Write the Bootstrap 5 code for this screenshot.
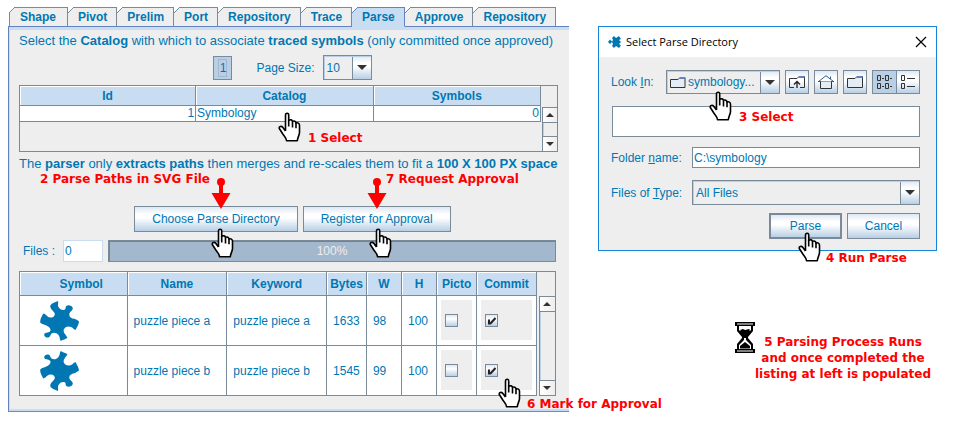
<!DOCTYPE html>
<html lang="en">
<head>
<meta charset="utf-8">
<meta name="viewport" content="width=device-width, initial-scale=1">
<title>Parse symbols</title>
<link href="https://cdn.jsdelivr.net/npm/bootstrap@5.3.0/dist/css/bootstrap.min.css" rel="stylesheet">
<style>
:root{--line:#7a8a99;--head:#c8ddf2;--ink:#0077b3;--edge:#6382bf;--face:#eee;
 --btn:linear-gradient(#dde8f3 0,#fff 30%,#fff 45%,#b8cfe5 100%);}
body{font-family:"Liberation Sans",Arial,sans-serif;font-size:12px;line-height:16px;color:var(--ink);background:#fff}
.screen{display:grid;grid-template-columns:561fr 339fr;column-gap:29px;padding:7px 27px 0 8px;align-items:start}
button,input,select{color:var(--ink);font-size:12px;border-radius:0}
/* tab strip */
.tabstrip{position:relative;z-index:1;margin-bottom:-1px;padding-left:1px}
.tabstrip button{position:relative;background:var(--face);border:1px solid var(--line);border-left:0;height:20px;padding:0 9px 0 10px;font-weight:700;line-height:18px;margin:0}
.tabstrip li:first-child button{border-left:1px solid var(--line)}
.tabstrip button::before{content:"";position:absolute;left:0;top:-1px;width:6px;height:6px;background:linear-gradient(135deg,#fff 0 45%,var(--line) 45% 58%,var(--face) 58%)}
.tabstrip li:first-child button{padding-right:11px}
.tabstrip li:first-child button::before{left:-1px}
.tabstrip button{border-bottom-color:var(--edge)}
.tabstrip button.active{background:var(--head);border-color:var(--edge);border-bottom-color:var(--head)}
.tabstrip button.active::before{background:linear-gradient(135deg,#fff 0 45%,var(--edge) 45% 58%,var(--head) 58%)}
.pane{border-left:1px solid var(--edge);border-top:1px solid var(--edge);border-bottom:1px solid var(--line);background:var(--face);box-shadow:inset 1px 3px var(--head),inset 0 -2px var(--head);padding:6px 11px 15px 10px}
.note-line{font-size:13px;line-height:16px;white-space:nowrap}
.pager{margin-top:6px;height:25px}
.pagebtn{width:19px;height:24px;border:1px solid var(--line);background:#b8cfe5;padding:0;line-height:16px}
.pagebtn span{display:block;margin:2px 4px;border:1px solid #a3b8cc}
/* drop-downs */
.combo{appearance:none;border:1px solid var(--line);height:25px;padding:0 22px 0 3px;box-shadow:inset 1px 1px #b8cfe5;
 background:url("data:image/svg+xml,%3Csvg xmlns='http://www.w3.org/2000/svg' width='10' height='5'%3E%3Cpath d='M0 0h10L5 5z' fill='%23333'/%3E%3C/svg%3E") no-repeat right 4px center,
 linear-gradient(var(--line),var(--line)) no-repeat right 18px top/1px 100%,
 var(--btn) no-repeat right top/18px 100%,var(--face)}
.combo-size{width:49px}
.combo-folder{height:24px;width:114px;padding-left:21px;
 background:url("data:image/svg+xml,%3Csvg xmlns='http://www.w3.org/2000/svg' width='17' height='13'%3E%3Cpath d='M1.5 3.5H9L11 1.5h5v10H1.5z' fill='%23e4edf6' stroke='%23333'/%3E%3Cpath d='M11 1h5v2h-6z' fill='%236382bf'/%3E%3C/svg%3E") no-repeat 2px center,
 url("data:image/svg+xml,%3Csvg xmlns='http://www.w3.org/2000/svg' width='10' height='5'%3E%3Cpath d='M0 0h10L5 5z' fill='%23333'/%3E%3C/svg%3E") no-repeat right 4px center,
 linear-gradient(var(--line),var(--line)) no-repeat right 18px top/1px 100%,
 var(--btn) no-repeat right top/18px 100%,var(--face)}
/* tables */
.gridbox{border:1px solid var(--line)}
.gridbox table{table-layout:fixed;border-collapse:separate;border-spacing:0;flex:1 1 0;width:0}
.gridbox th{background:var(--head);box-shadow:inset 1px 1px #fff;text-align:center;font-weight:700;border:solid var(--line);border-width:0 1px 1px 0;padding:0;overflow:hidden}
.gridbox td{background:#fff;border:solid var(--line);border-width:0 1px 1px 0;padding:0;white-space:nowrap}
.catalog{margin-top:5px;height:67px}
.catalog th{height:20px}
.catalog td{height:16px;line-height:15px;padding:0 1px}
.catalog table{align-self:flex-start}
.symbols{margin:9px 2px 0 0;border-bottom:0}
.symbols th{height:24px}
.symbols td{height:50px;padding-left:6px}
.symbols .first{padding-left:16px}
.symbols .pic{padding-left:20px}
.symbols .boxcell{padding:4px 4px 5px}
.boxcell label{display:flex;align-items:center;height:40px;background:var(--face);padding-left:4px}
.tick{appearance:none;width:13px;height:13px;border:1px solid var(--line);background:linear-gradient(#dde8f3,#fff 35%,#b8cfe5);margin:0}
.tick:checked{background:url("data:image/svg+xml,%3Csvg xmlns='http://www.w3.org/2000/svg' width='11' height='11'%3E%3Cpath d='M3 4.5v5M4 9L9.500 3' fill='none' stroke='%23222' stroke-width='2'/%3E%3C/svg%3E"),linear-gradient(#dde8f3,#fff 35%,#b8cfe5)}
.bar{width:16px;padding-left:1px}
.symbols .bar{width:18px;padding-left:2px}
.bar-top{height:21px}
.symbols .bar-top{height:24px}
.bar-body{border-left:1px solid var(--line);border-top:1px solid var(--line);box-shadow:inset 1px 1px #b8cfe5}
.bar button{border:0;background:linear-gradient(90deg,#fff,#eee);padding:0;height:15px;display:flex;align-items:center;justify-content:center}
.bar button:first-child{border-bottom:1px solid var(--line)}
.bar button:last-child{border-top:1px solid var(--line)}
.symbols .bar-body{border-bottom:1px solid var(--line)}
/* buttons and fields */
.steel{border:1px solid var(--line);background:var(--btn);height:26px;padding:0 17px;line-height:16px}
.steel.primary{border-width:2px}
.chooser .steel{width:73px;padding:0}
.actions{margin-top:34px;gap:5px}
.files{margin-top:8px;height:22px}
.count{width:40px;height:22px;border:1px solid var(--head);padding:0 1px;background:#fff}
.run{height:22px;border-radius:0;border:1px solid var(--line);box-shadow:inset 1px 1px var(--edge);background:#a3b8cc;font-size:12px;margin:0 2px 0 5px}
.run .progress-bar{background:transparent;color:#eee}
/* directory dialog */
.chooser{margin-top:19px;border:1px solid #1883d7;background:var(--face)}
.chooser header{background:#fff;height:30px;color:#000;font:11px/16px "Open Sans","Noto Sans",sans-serif;padding:0 9px}
.chooser h1{font:inherit;margin:0}
.chooser header button{border:0;background:none;padding:0;display:flex}
.chooser form{padding:13px 16px 11px 12px}
.tools{gap:5px}
.tool{width:24px;height:24px;border:1px solid var(--line);background:var(--btn);padding:0;display:flex;align-items:center;justify-content:center}
.tool.on{background:#b8cfe5;border-right:0}
.listing{height:31px;margin:12px 0 10px 1px;border:1px solid var(--line);background:#fff}
.flabel{width:81px}
.field{height:21px;border:1px solid var(--line);background:#fff;padding:0 1px}
/* walkthrough marks, laid over the controls */
.step{color:red;font:bold 12px/16px "DejaVu Sans",Verdana,sans-serif;white-space:nowrap}
.over{position:absolute;pointer-events:none}
.over.step{line-height:12px}
.hand{width:23px;height:30px}
.arrow{width:20px;height:31px}
.waiting{padding:71px 6px 0 137px}
</style>
</head>
<body>
<svg width="0" height="0" class="position-absolute" aria-hidden="true">
 <symbol id="hand" viewBox="0 0 23 30"><path d="M7.500 19V3.200C7.500 1.800 8.300 1.200 9.200 1.200S10.700 1.900 10.700 3.200V8.400C12 7.300 14.300 7.800 14.500 9.400C16 8.500 17.900 9.200 18 11C19.700 10.200 21.500 11.400 21.500 13.200V20.500C21.500 23 19.700 25 19.300 28.700H8.500C8.300 25.500 6.500 24.500 5 22.300L1.300 16.500C.8 14.500 3.300 13.600 4.700 15.300L7.500 19" fill="#fff" stroke="#000" stroke-width="1.600" stroke-linejoin="round"/><path d="M10.700 8v6.500M14.500 9.400v6M18 11v5.200" fill="none" stroke="#000" stroke-width="1.600"/></symbol>
 <symbol id="arrow" viewBox="0 0 20 31"><circle cx="10" cy="4" r="4" fill="red"/><path d="M8 4h4v11h7.500L10 31 .5 15H8z" fill="red"/></symbol>
 <symbol id="piece" viewBox="0 0 118 121"><path d="M32 12C38 5 49 3 54 0C57 5 52 12 56 18C60 25 66 28 72 27C80 26 76 19 79 16C84 10 97 13 99 21C101 29 91 31 89 38C87 48 94 52 104 54C109 55 113 59 118 61C118 70 112 78 108 87C103 88 101 82 94 79C84 75 76 78 72 86C69 96 78 101 83 111C77 116 70 116 63 121C59 117 61 109 56 103C50 95 41 94 35 98C31 102 32 107 27 110C20 113 11 107 13 100C15 94 25 97 30 92C34 88 31 83 27 79C20 72 8 72 1 66C-1 57 5 47 10 38C15 38 18 43 22 46C28 51 38 51 43 45C49 36 39 32 35 26C31 22 30 17 32 12Z" fill="#0077b3"/></symbol>
 <symbol id="up" viewBox="0 0 10 5"><path d="M5 0l4 4H1z" fill="#333"/></symbol>
 <symbol id="down" viewBox="0 0 10 5"><path d="M1 0h8L5 4z" fill="#333"/></symbol>
</svg>
<main class="screen">
 <section class="position-relative">
  <ul class="tabstrip list-unstyled d-flex" role="tablist">
   <li><button role="tab">Shape</button></li><li><button role="tab">Pivot</button></li><li><button role="tab">Prelim</button></li><li><button role="tab">Port</button></li><li><button role="tab">Repository</button></li><li><button role="tab">Trace</button></li><li><button role="tab" class="active" aria-selected="true">Parse</button></li><li><button role="tab">Approve</button></li><li><button role="tab">Repository</button></li>
  </ul>
  <div class="pane">
   <div class="note-line">Select the <b>Catalog</b> with which to associate <b>traced symbols</b> (only committed once approved)</div>
   <div class="pager d-flex align-items-center justify-content-center ps-2">
    <button class="pagebtn"><span>1</span></button>
    <label for="size" class="ms-4 me-2">Page Size:</label>
    <select id="size" class="combo combo-size"><option>10</option></select>
   </div>
   <div class="gridbox catalog d-flex">
    <table>
     <colgroup><col style="width:33.8%"><col style="width:34.1%"><col style="width:32.1%"></colgroup>
     <thead><tr><th>Id</th><th>Catalog</th><th>Symbols</th></tr></thead>
     <tbody><tr><td class="text-end">1</td><td>Symbology</td><td class="text-end">0</td></tr></tbody>
    </table>
    <div class="bar d-flex flex-column"><div class="bar-top"></div>
     <div class="bar-body flex-fill d-flex flex-column justify-content-between"><button aria-label="Scroll up"><svg width="10" height="5"><use href="#up"/></svg></button><button aria-label="Scroll down"><svg width="10" height="5"><use href="#down"/></svg></button></div></div>
   </div>
   <div class="note-line mt-1">The <b>parser</b> only <b>extracts paths</b> then merges and re-scales them to fit a <b>100 X 100 PX space</b></div>
   <div class="actions d-flex justify-content-center ps-2">
    <button class="steel">Choose Parse Directory</button><button class="steel">Register for Approval</button>
   </div>
   <div class="files d-flex align-items-center">
    <label for="count" class="ps-1 me-2">Files :</label><input id="count" class="count" value="0">
    <div class="progress run flex-fill" role="progressbar" aria-valuenow="100"><div class="progress-bar" style="width:100%">100%</div></div>
   </div>
   <div class="gridbox symbols d-flex">
    <table>
     <colgroup><col style="width:20.8%"><col style="width:19.3%"><col style="width:19.3%"><col style="width:7.7%"><col style="width:6.8%"><col style="width:6.8%"><col style="width:7.7%"><col style="width:11.6%"></colgroup>
     <thead><tr><th class="first">Symbol</th><th>Name</th><th>Keyword</th><th>Bytes</th><th>W</th><th>H</th><th>Picto</th><th>Commit</th></tr></thead>
     <tbody>
      <tr><td class="pic"><svg width="39" height="40" class="d-block"><use href="#piece"/></svg></td><td>puzzle piece a</td><td>puzzle piece a</td><td>1633</td><td>98</td><td>100</td><td class="boxcell"><label><input type="checkbox" class="tick" aria-label="Picto a"></label></td><td class="boxcell"><label><input type="checkbox" class="tick" checked aria-label="Commit a"></label></td></tr>
      <tr><td class="pic"><svg width="39" height="40" viewBox="0 0 39 40" class="d-block"><g transform="matrix(1 0 0 -1 0 40)"><use href="#piece" width="39" height="40"/></g></svg></td><td>puzzle piece b</td><td>puzzle piece b</td><td>1545</td><td>99</td><td>100</td><td class="boxcell"><label><input type="checkbox" class="tick" aria-label="Picto b"></label></td><td class="boxcell"><label><input type="checkbox" class="tick" checked aria-label="Commit b"></label></td></tr>
     </tbody>
    </table>
    <div class="bar d-flex flex-column"><div class="bar-top"></div>
     <div class="bar-body flex-fill d-flex flex-column justify-content-between"><button aria-label="Scroll up"><svg width="10" height="5"><use href="#up"/></svg></button><button aria-label="Scroll down"><svg width="10" height="5"><use href="#down"/></svg></button></div></div>
   </div>
  </div>
  <svg class="over hand" style="left:270px;top:105px"><use href="#hand"/></svg>
  <div class="over step" style="left:300px;top:125px">1 Select</div>
  <div class="over step" style="left:32px;top:166px">2 Parse Paths in SVG File</div>
  <svg class="over arrow" style="left:203px;top:171px"><use href="#arrow"/></svg>
  <svg class="over hand" style="left:203px;top:221px"><use href="#hand"/></svg>
  <svg class="over arrow" style="left:359px;top:171px"><use href="#arrow"/></svg>
  <svg class="over hand" style="left:361px;top:221px"><use href="#hand"/></svg>
  <div class="over step" style="left:378px;top:166px">7 Request Approval</div>
  <svg class="over hand" style="left:490px;top:371px"><use href="#hand"/></svg>
  <div class="over step" style="left:519px;top:391px">6 Mark for Approval</div>
 </section>
 <section>
  <div class="chooser position-relative">
   <header class="d-flex align-items-center">
    <svg width="14" height="14" viewBox="0 0 14 14" class="me-1"><path d="M0 7l2-2.500 2 2L5 5 4 3l2-2 2 2 3-2 2 3-2 1 2 2-2 2 2 1.500-2 2.500-3-2-2 2-2-2 1-2-1-2-2 2z" fill="#0077b3"/></svg>
    <h1>Select Parse Directory</h1>
    <button class="ms-auto" aria-label="Close"><svg width="12" height="12" viewBox="0 0 12 12"><path d="M1 1l10 10M11 1L1 11" stroke="#000" stroke-width="1.200"/></svg></button>
   </header>
   <form onsubmit="return false">
    <div class="tools d-flex align-items-center">
     <label for="look" class="me-auto">Look <u>I</u>n:</label>
     <select id="look" class="combo combo-folder"><option>symbology...</option></select>
     <button type="button" class="tool" aria-label="Up one level"><svg width="16" height="14" viewBox="0 0 16 14"><path d="M.5 12.500v-9H8l2-2h5.500v11H11M.5 12.500H5" fill="none" stroke="#333"/><path d="M10 1h5.500v2H9z" fill="#6382bf"/><path d="M8 13V6.500M5 9.500l3-3 3 3" fill="none" stroke="#222" stroke-width="1.300"/></svg></button>
     <button type="button" class="tool" aria-label="Home"><svg width="16" height="14" viewBox="0 0 16 14"><path d="M.5 6.500L8 .7l7.500 5.800M12.500 4V1.500M0 6.500h16" fill="none" stroke="#2e5d8c"/><path d="M2.500 6.500v7h11v-7" fill="#e4edf6" stroke="#333"/></svg></button>
     <button type="button" class="tool" aria-label="New folder"><svg width="16" height="14" viewBox="0 0 16 14"><path d="M.5 12.500v-9H8l2-2h5.500v11z" fill="#e4edf6" stroke="#333"/><path d="M10 1h5.500v2H9z" fill="#6382bf"/></svg></button>
     <div class="d-flex">
      <button type="button" class="tool on" aria-label="List view"><svg width="16" height="14" viewBox="0 0 16 14" fill="none" stroke="#333"><path d="M.5.500h3v5h-3zM8.500.500h3v5h-3zM.5 8.500h3v5h-3zM8.500 8.500h3v5h-3zM5 3.500h2M13 3.500h2M5 11.500h2M13 11.500h2"/></svg></button>
      <button type="button" class="tool" aria-label="Details view"><svg width="14" height="14" viewBox="0 0 14 14" fill="none" stroke="#333"><path d="M.5.500h3v5h-3zM.5 8.500h3v5h-3zM6 3.500h8M6 11.500h8"/></svg></button>
     </div>
    </div>
    <div class="listing"></div>
    <div class="d-flex align-items-center"><label for="folder" class="flabel">Folder <u>n</u>ame:</label><input id="folder" class="field flex-fill" value="C:\symbology"></div>
    <div class="d-flex align-items-center my-2 pt-1"><label for="kind" class="flabel">Files of <u>T</u>ype:</label><select id="kind" class="combo flex-fill"><option>All Files</option></select></div>
    <div class="tools d-flex justify-content-end"><button type="button" class="steel primary">Parse</button><button type="button" class="steel">Cancel</button></div>
   </form>
   <svg class="over hand" style="left:110px;top:64px"><use href="#hand"/></svg>
   <div class="over step" style="left:140px;top:84px">3 Select</div>
   <svg class="over hand" style="left:199px;top:205px"><use href="#hand"/></svg>
   <div class="over step" style="left:227px;top:225px">4 Run Parse</div>
  </div>
  <div class="waiting d-flex align-items-start justify-content-between">
   <svg width="20" height="31" viewBox="0 0 20 31"><path d="M0 0h20v4h-2v5l-5 6v1l5 6v5h2v4H0v-4h2v-5l5-6v-1L2 9V4H0z" fill="#000"/><path d="M2 2h16M2 29h16" stroke="#fff" stroke-width="1"/><path d="M4 4h12v4l-1 1-2-1-3 1-3-1-2 1-1-1z M9 16h2v2l5 5v4H4v-4l5-5z" fill="#fff"/><path d="M5 8l3-1 2 1 4-1 1 1-5 5zM10 20l5 4v2.500H5V24z" fill="#000"/></svg>
   <p class="step text-center mb-0 pt-2 mt-1">5 Parsing Process Runs<br>and once completed the<br>listing at left is populated</p>
  </div>
 </section>
</main>
<script src="https://cdn.jsdelivr.net/npm/bootstrap@5.3.0/dist/js/bootstrap.bundle.min.js"></script>
</body>
</html>
